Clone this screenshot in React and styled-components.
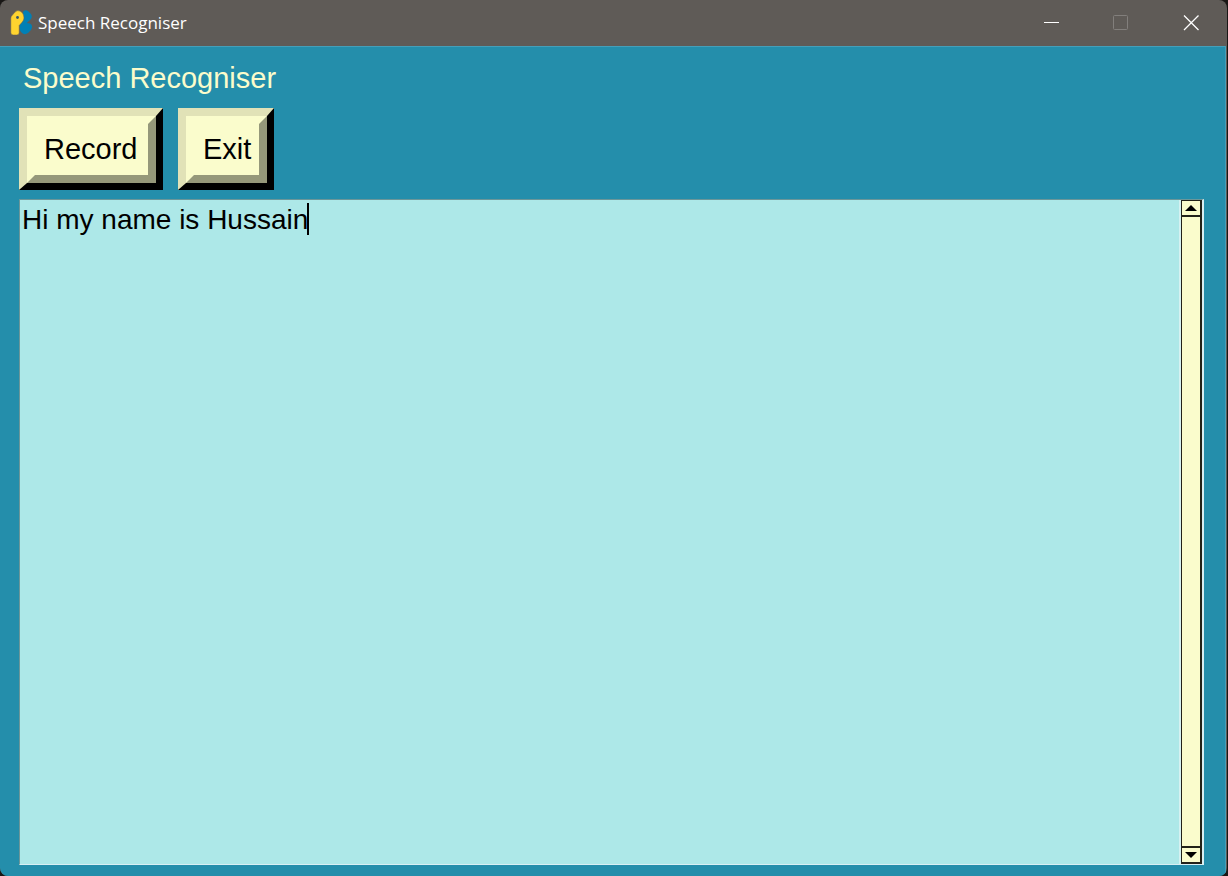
import React from "react";
import styled, { createGlobalStyle, css } from "styled-components";

const GlobalStyle = createGlobalStyle`
  *, *::before, *::after { box-sizing: border-box; }
  html, body, #root { height: 100%; }
  body { margin: 0; background: #191715; overflow: hidden; }
  button, textarea { font: inherit; color: inherit; margin: 0; padding: 0; border-radius: 0; }
`;

const Window = styled.div`
  display: flex;
  flex-direction: column;
  height: 100%;
  margin-right: 1px;
  padding-right: 1px;
  background: #5f5b57;
  border-radius: 8px;
  overflow: hidden;
`;

const TitleBar = styled.header`
  display: flex;
  align-items: center;
  flex: none;
  height: 46px;
  padding-left: 10px;
  color: #ffffff;
  font: 17px/24px "Open Sans", "Noto Sans", sans-serif;
`;

const AppIcon = styled.svg`
  width: 23px;
  height: 26px;
  margin-right: 5px;
`;

const WindowTitle = styled.span`
  flex: 1;
`;

const CaptionButton = styled.button`
  display: flex;
  align-items: center;
  justify-content: center;
  width: 70px;
  height: 46px;
  border: 0;
  background: transparent;
  color: ${(p) => (p.disabled ? "#827f7c" : "#ffffff")};
`;

const Content = styled.main`
  display: flex;
  flex-direction: column;
  flex: 1;
  min-height: 0;
  padding: 14px 21px 11px 19px;
  border-top: 1px solid #449fba;
  border-right: 1px solid #449fba;
  background: #248eab;
  font: 29px/34px "Liberation Sans", Arial, sans-serif;
  color: #000000;
`;

const Heading = styled.h1`
  margin: 0 4px 13px;
  font: inherit;
  color: #fbfccb;
`;

const Toolbar = styled.div`
  display: flex;
  gap: 15px;
  margin-bottom: 9px;
`;

const ReliefButton = styled.button`
  display: flex;
  width: ${(p) => p.$width}px;
  border: 8px solid;
  border-color: #e1e2b7 #000000 #000000 #e1e2b7;
  border-right-width: 7px;
  border-bottom-width: 7px;
  background: #fafccc;
`;

const ReliefFace = styled.span`
  flex: 1;
  padding: 16px 0 9px 17px;
  text-align: left;
  border: solid #95987a;
  border-width: 0 8px 8px 0;
  position: relative;

  &::before,
  &::after {
    content: "";
    position: absolute;
    border: 4px solid;
    border-color: #fafccc transparent transparent #fafccc;
  }
  &::before {
    top: 0;
    right: -8px;
  }
  &::after {
    bottom: -8px;
    left: 0;
  }
`;

const Editor = styled.div`
  display: flex;
  flex: 1;
  min-height: 0;
  border: solid;
  border-width: 1px 2px 1px 1px;
  border-color: #6b9699 #d8eff3 #d8eff3 #6b9699;
`;

const TextPane = styled.div`
  position: relative;
  display: flex;
  flex: 1;
  border-right: 2px solid #d5f1f1;
`;

const TextArea = styled.textarea`
  flex: 1;
  padding: 3px 2px;
  border: 0;
  outline: 0;
  resize: none;
  background: #ade8e8;
  font-size: 28px;
`;

const Caret = styled.span`
  position: absolute;
  top: 3px;
  left: 287px;
  width: 2px;
  height: 32px;
  background: #000000;
`;

const ScrollBar = styled.div`
  display: flex;
  flex-direction: column;
  width: 21px;
  border: solid #222219;
  border-width: 1px 2px 2px 1px;
  background: #fafccc;
`;

const Thumb = styled.div`
  flex: 1;
`;

const ArrowButton = styled.button`
  display: flex;
  align-items: center;
  justify-content: center;
  height: 16px;
  border: 0;
  background: transparent;
  ${(p) =>
    p.$end
      ? css`border-top: 2px solid #222219;`
      : css`border-bottom: 2px solid #222219;`}
`;

function BevelButton({ children, width }) {
  return (
    <ReliefButton type="button" $width={width}>
      <ReliefFace>{children}</ReliefFace>
    </ReliefButton>
  );
}

export default function App() {
  return (
    <>
      <GlobalStyle />
      <Window>
        <TitleBar>
          <AppIcon viewBox="0 0 23 26" aria-hidden="true">
            <path
              fill="#0080b5"
              d="M13.500 1Q16-.5 18.500 1.500L21 4q1.500 2.500 0 5l-4.200 4L20 13.500q2.300 1 2 3.500-.2 2-1.500 3.500l-2.500 2.500q-3.500 2.500-6.500-.5-1.500-1.500-1.800-3.500l0-4z"
            />
            <path
              fill="#ffd42f"
              stroke="#5f5b57"
              strokeWidth="0.500"
              d="M.8 8.200Q.8 6.500 2.200 5.300L5 2Q7.500-.3 10.500 1.200 14 3.300 14 8q0 2-1.700 4L9.200 15.500v7q0 2.500-2.500 2.500H3.300Q.8 25 .8 22.500z"
            />
            <circle cx="7.500" cy="7.500" r="1.400" fill="#37576a" />
          </AppIcon>
          <WindowTitle>Speech Recogniser</WindowTitle>
          <CaptionButton type="button" aria-label="Minimize">
            <svg width="16" height="16" viewBox="0 0 16 16">
              <path d="M1 7.500h15" stroke="currentColor" />
            </svg>
          </CaptionButton>
          <CaptionButton type="button" aria-label="Maximize" disabled>
            <svg width="16" height="16" viewBox="0 0 16 16" fill="none">
              <rect x="0.500" y="0.500" width="14" height="14" rx="1" stroke="currentColor" />
            </svg>
          </CaptionButton>
          <CaptionButton type="button" aria-label="Close">
            <svg width="16" height="16" viewBox="0 0 16 16">
              <path d="M1 0.500l14.500 14.500M15.500 0.500 1 15" stroke="currentColor" strokeWidth="1.300" />
            </svg>
          </CaptionButton>
        </TitleBar>
        <Content>
          <Heading>Speech Recogniser</Heading>
          <Toolbar>
            <BevelButton width={144}>Record</BevelButton>
            <BevelButton width={96}>Exit</BevelButton>
          </Toolbar>
          <Editor>
            <TextPane>
              <TextArea
                aria-label="Recognised text"
                defaultValue="Hi my name is Hussain"
                spellCheck={false}
              />
              <Caret />
            </TextPane>
            <ScrollBar>
              <ArrowButton type="button" aria-label="Scroll up">
                <svg width="12" height="6" viewBox="0 0 12 6">
                  <path d="M0 6 6 0l6 6z" />
                </svg>
              </ArrowButton>
              <Thumb />
              <ArrowButton type="button" aria-label="Scroll down" $end>
                <svg width="12" height="6" viewBox="0 0 12 6">
                  <path d="M0 0 6 6l6-6z" />
                </svg>
              </ArrowButton>
            </ScrollBar>
          </Editor>
        </Content>
      </Window>
    </>
  );
}
